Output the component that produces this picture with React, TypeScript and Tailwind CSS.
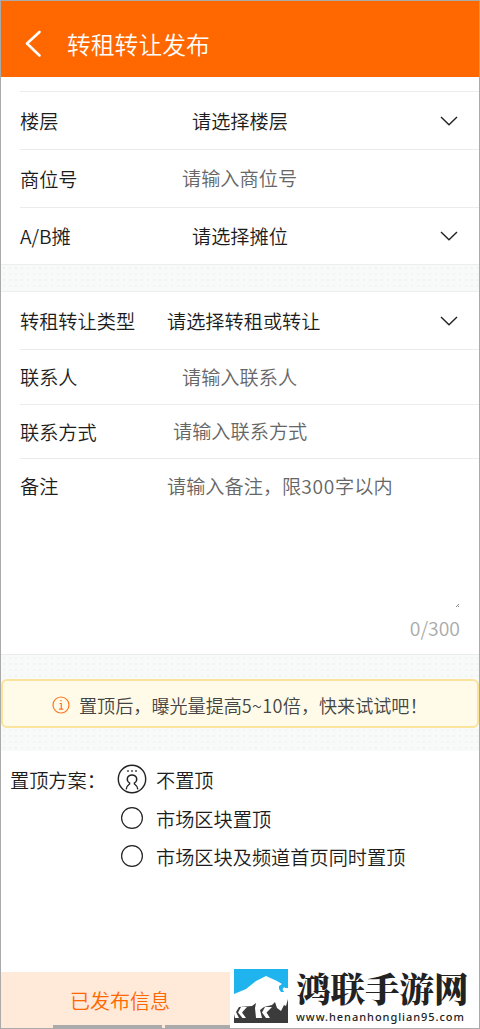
import type { ReactNode } from "react";

function Chevron() {
  return (
    <svg className="absolute right-[20px] top-1/2 -mt-[6px] h-[12px] w-[20px]" viewBox="0 0 20 12" fill="none" stroke="#222" strokeWidth="1.4">
      <path d="M2 2 L10 9.8 L18 2" />
    </svg>
  );
}

function Row({ label, value, pad, height, muted, arrow, last }: { label: string; value: string; pad: string; height: string; muted?: boolean; arrow?: boolean; last?: boolean }) {
  return (
    <div className={`relative ml-[19px] flex shrink-0 items-center ${height} ${last ? "" : "border-b border-[#ececec]"}`}>
      <span className={`${pad} shrink-0 whitespace-nowrap`}>{label}</span>
      <span className={muted ? "-mt-px whitespace-nowrap text-[#666]" : "whitespace-nowrap"}>{value}</span>
      {arrow && <Chevron />}
    </div>
  );
}

function Band({ className, children }: { className: string; children?: ReactNode }) {
  return (
    <div className={`bg-[#f8faf9] bg-[radial-gradient(#f1f3f2_0.7px,transparent_0.8px)] bg-[size:6px_6px] ${className}`}>{children}</div>
  );
}

function PersonRadio() {
  return (
    <svg className="h-[30px] w-[30px]" viewBox="0 0 30 30" fill="none" stroke="#222" strokeWidth="1.4">
      <circle cx="15" cy="15" r="13.7" />
      <path d="M9.2 25.4 C9.4 22 10.6 21.4 12.6 20 V19 C8.6 16.4 10 11 15 11 C20 11 21.4 16.4 17.4 19 V20 C19.4 21.4 20.6 22 20.8 25.4" />
      <path d="M10.2 7 h1.6 M14.2 7 h1.6 M18.2 7 h1.6" strokeWidth="1.6" />
    </svg>
  );
}

function Radio() {
  return (
    <svg className="h-[24px] w-[30px]" viewBox="0 0 30 24" fill="none" stroke="#222" strokeWidth="1.2">
      <circle cx="15" cy="12" r="10.4" />
    </svg>
  );
}

function BullLogo() {
  return (
    <svg className="h-[54px] w-[54px] shrink-0" viewBox="0 0 54 54">
      <rect width="54" height="54" fill="#20b4ee" />
      <path d="M0 28 H54 V54 H0 Z" fill="#3b3b3b" />
      <path d="M0 25 L12 20 L22 12 L32 7 L43 12 L48 15 L51 19 L54 19 V30 L52 37 L50 36 L47 42 L43 39 L41 33 L38 36 L30 38 L26 41 L28 49 H22 L21 39 L22 34 L18 37 L5 38 L2 43 L5 49 H1 L0 45 Z" fill="#fff" />
      <path d="M7 38 H13 L8 43.5 L12 49 H8.5 L4 43.5 Z M31 38 H38 L32.5 43.5 L36 49 H32 L28 43.5 Z" fill="#fff" />
      <path d="M47 10 L50 13 L51 17 L48.5 20 L50 23 L47 23 L45 20 L45 17 L48 15 Z" fill="#20b4ee" />
    </svg>
  );
}

export default function App() {
  return (
    <div className="relative flex h-[1029px] w-[480px] flex-col overflow-hidden border border-[#aaa] bg-white font-['Noto_Sans_CJK_SC',sans-serif] text-[19.2px] font-[350] leading-[28px] text-[#1c1c1c]">
      <header className="flex h-[76px] shrink-0 items-center bg-[#ff6700] pt-[10px] text-white">
        <svg className="ml-[22px] h-[30px] w-[20px]" viewBox="0 0 20 30" fill="none" stroke="currentColor" strokeWidth="2.6" strokeLinecap="round" strokeLinejoin="round">
          <path d="M16.5 3 L4 14.5 L16.5 26.5" />
        </svg>
        <h1 className="-mt-px ml-[24px] text-[23.8px] font-[350]">转租转让发布</h1>
      </header>
      <div className="ml-[19px] h-[15px] shrink-0 border-b border-[#ececec]" />
      <Row label="楼层" value="请选择楼层" pad="w-[172px]" height="h-[58px]" arrow />
      <Row label="商位号" value="请输入商位号" pad="w-[162px]" height="h-[58px]" muted />
      <Row label="A/B摊" value="请选择摊位" pad="w-[172px]" height="h-[56px]" arrow last />
      <Band className="h-[28px] shrink-0 border-y border-[#ebeeed]" />
      <Row label="转租转让类型" value="请选择转租或转让" pad="w-[147px]" height="h-[58px]" arrow />
      <Row label="联系人" value="请输入联系人" pad="w-[162px]" height="h-[55px]" muted />
      <Row label="联系方式" value="请输入联系方式" pad="w-[153px]" height="h-[54px]" muted />
      <section className="relative flex h-[195px] shrink-0 pl-[19px] pt-[13px]">
        <span className="w-[147px]">备注</span>
        <span className="whitespace-nowrap text-[#666]">请输入备注，限<span className="tracking-[0.7px]">300</span>字以内</span>
        <svg className="absolute right-[19px] top-[145px] h-[4px] w-[4px]" viewBox="0 0 4 4" stroke="#888"><path d="M0 3 L3 0 M2 3 L3 2" /></svg>
        <span className="absolute bottom-[12px] right-[19px] text-[19.4px] text-[#aaa]">0/300</span>
      </section>
      <Band className="h-[97px] shrink-0 border-t border-[#e9eceb] pt-[24px]">
        <div className="flex h-[49px] items-center rounded-[6px] border-2 border-[#fbe39b] bg-[#fffbe8] pl-[49px] pt-[2px] text-[18.1px] text-[#444]">
          <svg className="mr-[9px] h-[18px] w-[18px]" viewBox="0 0 18 18" fill="none" stroke="#ff7520" strokeWidth="1.2">
            <circle cx="9" cy="9" r="8" />
            <path d="M7.5 7.5 H9.3 V13 M7 13.2 H11.3 M8.4 4.7 H9.7" />
          </svg>
          <span className="whitespace-nowrap">置顶后，曝光量提高<span className="tracking-[0.3px]">5~10</span>倍，快来试试吧！</span>
        </div>
      </Band>
      <section className="flex flex-1 pl-[9px] pt-[9px]">
        <span className="mt-[6px] w-[107px]">置顶方案：</span>
        <div className="flex flex-col">
          <div className="flex h-[38px] items-center gap-[9px]"><PersonRadio /><span className="mt-[2px]">不置顶</span></div>
          <div className="flex h-[39px] items-center gap-[9px]"><Radio /><span className="mt-[2px]">市场区块置顶</span></div>
          <div className="flex h-[38px] items-center gap-[9px]"><Radio /><span className="mt-[2px]">市场区块及频道首页同时置顶</span></div>
        </div>
      </section>
      <footer className="relative flex h-[56px] w-[229px] shrink-0 items-center justify-center bg-[#ffe9d8] pl-[9px] pt-[1px] text-[20px] text-[#ff6700]">
        已发布信息
        <div className="absolute bottom-0 left-[52px] flex h-[3px] w-[177px] gap-[3px]">
          <div className="w-[109px] bg-[#aaa]" />
          <div className="flex-1 bg-[#aaa]" />
        </div>
      </footer>
      <aside className="absolute -bottom-px -right-px flex h-[65px] w-[250px] bg-white pl-[4px] pt-[5px] text-[#222]">
        <BullLogo />
        <div className="ml-[8px]">
          <div className="whitespace-nowrap font-['Noto_Serif_CJK_SC','Noto_Sans_CJK_SC',serif] text-[34.5px] font-black leading-[37px]">鸿联手游网</div>
          <div className="mt-[4px] whitespace-nowrap font-['Noto_Sans',sans-serif] text-[11px] font-medium leading-[14px] tracking-[0.95px]">www.henanhonglian95.com</div>
        </div>
      </aside>
    </div>
  );
}
